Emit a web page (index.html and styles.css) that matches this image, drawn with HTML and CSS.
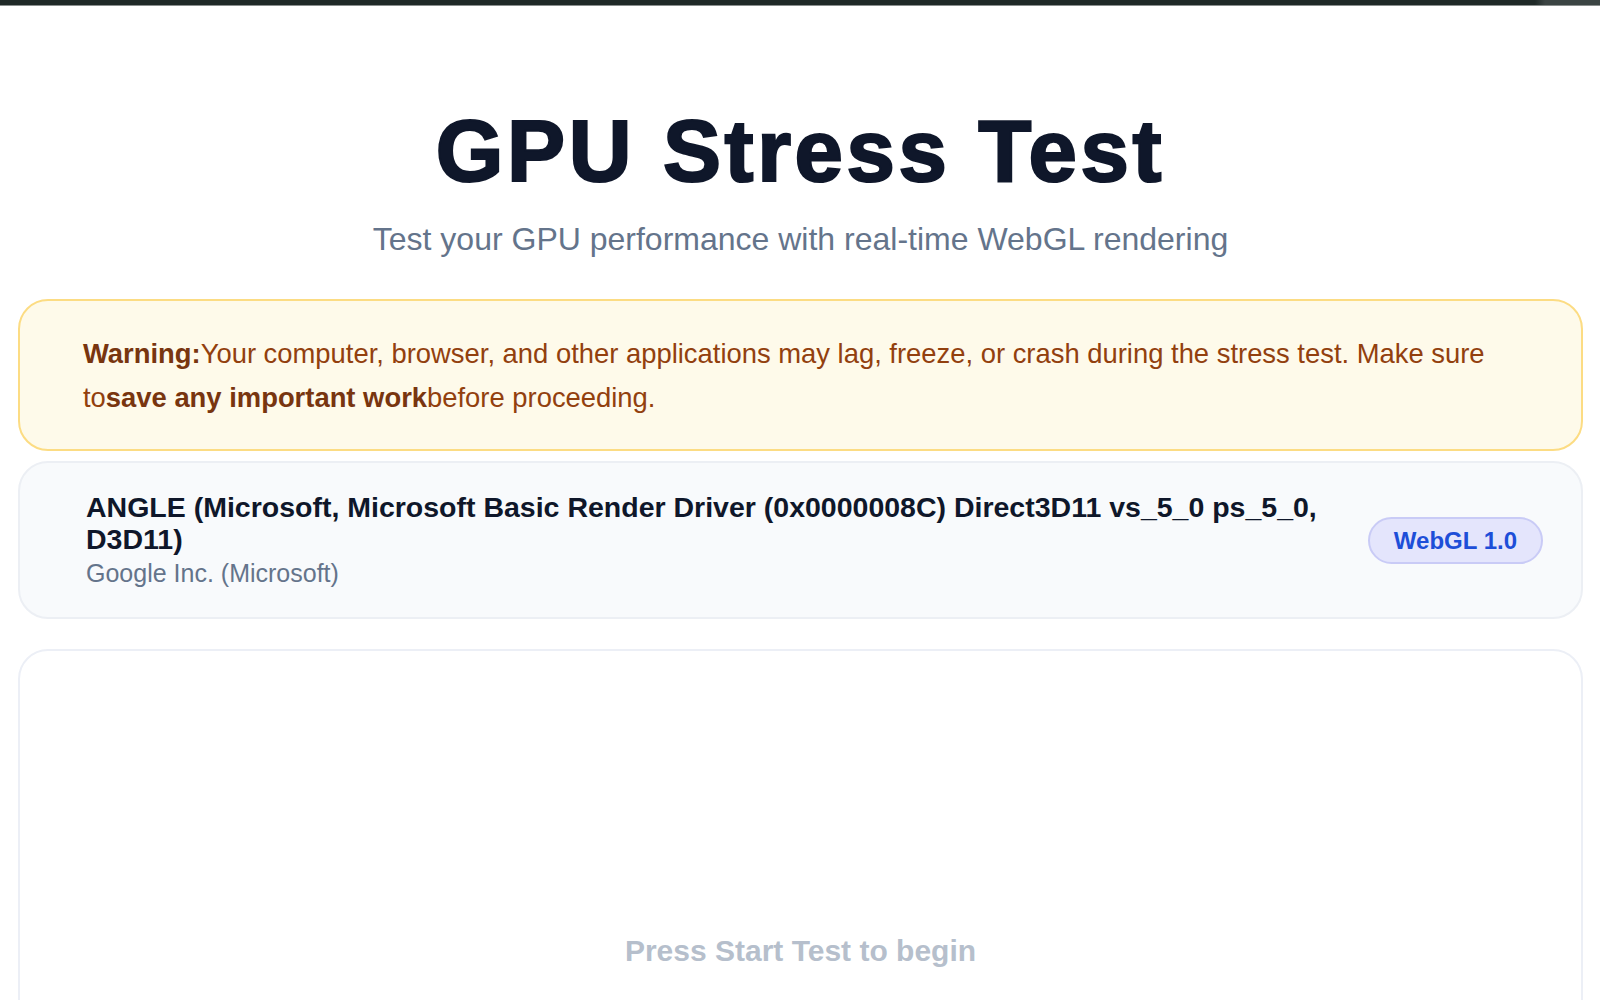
FILE: index.html
```html
<!DOCTYPE html>
<html lang="en">
<head>
<meta charset="utf-8">
<title>GPU Stress Test</title>
<link rel="stylesheet" href="styles.css">
</head>
<body>
<div class="topbar"></div>
<main class="page">
  <header class="hero">
    <h1 class="title">GPU Stress Test</h1>
    <p class="subtitle">Test your GPU performance with real-time WebGL rendering</p>
  </header>
  <section class="warning">
    <p><strong>Warning:</strong>Your computer, browser, and other applications may lag, freeze, or crash during the stress test. Make sure to<strong>save any important work</strong>before proceeding.</p>
  </section>
  <section class="gpu-card">
    <div class="gpu-info">
      <div class="gpu-name">ANGLE (Microsoft, Microsoft Basic Render Driver (0x0000008C) Direct3D11 vs_5_0 ps_5_0, D3D11)</div>
      <div class="gpu-vendor">Google Inc. (Microsoft)</div>
    </div>
    <span class="badge">WebGL 1.0</span>
  </section>
  <section class="canvas-card">
    <p class="placeholder">Press Start Test to begin</p>
  </section>
</main>
</body>
</html>
```
FILE: styles.css
```css
* { box-sizing: border-box; }
html, body { margin: 0; padding: 0; }
body {
  background: #ffffff;
  font-family: "Liberation Sans", Arial, sans-serif;
  color: #0f172a;
  overflow: hidden;
  height: 1000px;
}
.topbar {
  height: 6px;
  background: linear-gradient(to right, #1f2927 0, #1f2927 1535px, #3b4443 1545px, #3b4443 100%);
  border-bottom: 1px solid #8a8f8e;
}
.page {
  padding: 0 17px 0 18px;
}
.hero {
  text-align: center;
  padding-top: 95px;
}
.title {
  margin: 0;
  font-size: 87px;
  line-height: 100px;
  font-weight: 700;
  letter-spacing: 3.6px;
  -webkit-text-stroke: 2.2px #0f172a;
  color: #0f172a;
}
.subtitle {
  margin: 18px 0 0;
  font-size: 32px;
  line-height: 40px;
  color: #64748b;
}
.warning {
  margin-top: 40px;
  background: #fefaea;
  border: 2px solid #fcdc83;
  border-radius: 30px;
  padding: 31px 60px 29px 63px;
}
.warning p {
  margin: 0;
  font-size: 27.4px;
  line-height: 44px;
  color: #92400e;
}
.warning strong {
  color: #78350f;
}
.gpu-card {
  margin-top: 10px;
  background: #f8fafc;
  border: 2px solid #eceff4;
  border-radius: 30px;
  padding: 28px 38px 28px 66px;
  display: flex;
  align-items: center;
  gap: 40px;
}
.gpu-info {
  flex: 1;
  min-width: 0;
}
.gpu-name {
  font-size: 28.5px;
  line-height: 32px;
  font-weight: 700;
  color: #0f172a;
}
.gpu-vendor {
  font-size: 25px;
  line-height: 32px;
  color: #64748b;
  margin-top: 2px;
}
.badge {
  flex: none;
  background: #e4e5fc;
  border: 2px solid #c9cbf6;
  border-radius: 999px;
  color: #1d4ed8;
  font-weight: 700;
  font-size: 24px;
  line-height: 43px;
  padding: 0 24px;
}
.canvas-card {
  margin-top: 30px;
  height: 420px;
  background: #ffffff;
  border: 2px solid #eceff6;
  border-radius: 30px;
  padding-top: 282px;
  text-align: center;
}
.placeholder {
  margin: 0;
  font-size: 30px;
  line-height: 36px;
  font-weight: 700;
  color: #b6bfcc;
}
```
